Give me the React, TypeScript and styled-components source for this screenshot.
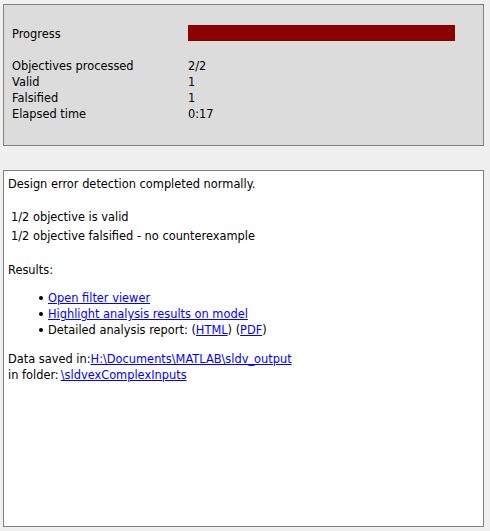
import React from "react";
import styled, { createGlobalStyle } from "styled-components";

const Global = createGlobalStyle`
  html, body { margin: 0; padding: 0; background: #f0f0f0; }
  body { font-family: "DejaVu Sans", Verdana, sans-serif; font-size: 11.4px; color: #000; }
`;

const Page = styled.div`
  display: flex;
  flex-direction: column;
  padding: 4px 0 0 3px;
  gap: 24px;
`;

const StatusPanel = styled.section`
  box-sizing: border-box;
  width: 481px;
  height: 142px;
  background: #dcdcdc;
  border: 1px solid #808080;
  padding: 20px 0 0 8px;
  display: grid;
  grid-template-columns: 176px 267px;
  grid-auto-rows: 16px;
  line-height: 16px;
`;

const Cell = styled.div`
  padding-top: 1px;
  white-space: nowrap;
`;

const Spacer = styled.div`
  grid-column: 1 / -1;
`;

const Bar = styled.div`
  background: #8b0000;
  height: 16px;
`;

const ReportPanel = styled.section`
  box-sizing: border-box;
  width: 481px;
  height: 357px;
  background: #fff;
  border: 1px solid #808080;
  padding: 5px 4px 0 4px;
  line-height: 16px;
  display: flex;
  flex-direction: column;
`;

const Line = styled.div<{ $top?: number; $indent?: number; $h?: number }>`
  margin-top: ${(p) => p.$top ?? 0}px;
  padding-left: ${(p) => p.$indent ?? 0}px;
  height: ${(p) => p.$h ?? 16}px;
  display: flex;
  align-items: center;
  white-space: nowrap;
`;

const List = styled.ul`
  margin: 12px 0 0 0;
  padding: 0 0 0 40px;
  list-style: none;
`;

const Item = styled.li`
  position: relative;
  height: 16px;
  display: flex;
  align-items: center;
  white-space: nowrap;
  &::before {
    content: "";
    position: absolute;
    left: -9px;
    top: 6px;
    width: 4px;
    height: 4px;
    border-radius: 50%;
    background: #000;
  }
`;

const Link = styled.a`
  color: #0000ff;
  text-decoration: underline;
  cursor: pointer;
`;

const PathLink = styled(Link)<{ $gap?: number }>`
  margin-left: ${(p) => p.$gap ?? 2}px;
`;

export default function App() {
  return (
    <>
      <Global />
      <Page>
        <StatusPanel>
          <Cell>Progress</Cell>
          <Bar />
          <Spacer />
          <Cell>Objectives processed</Cell>
          <Cell>2/2</Cell>
          <Cell>Valid</Cell>
          <Cell>1</Cell>
          <Cell>Falsified</Cell>
          <Cell>1</Cell>
          <Cell>Elapsed time</Cell>
          <Cell>0:17</Cell>
        </StatusPanel>
        <ReportPanel>
          <Line>Design error detection completed normally.</Line>
          <Line $top={16} $indent={3} $h={18}>1/2 objective is valid</Line>
          <Line $indent={3} $h={19}>1/2 objective falsified - no counterexample</Line>
          <Line $top={17}>Results:</Line>
          <List>
            <Item><Link>Open filter viewer</Link></Item>
            <Item><Link>Highlight analysis results on model</Link></Item>
            <Item>
              Detailed analysis report: (<Link>HTML</Link>) (<Link>PDF</Link>)
            </Item>
          </List>
          <Line $top={13}>
            Data saved in:<PathLink $gap={0}>H:\Documents\MATLAB\sldv_output</PathLink>
          </Line>
          <Line>
            in folder:<PathLink>\sldvexComplexInputs</PathLink>
          </Line>
        </ReportPanel>
      </Page>
    </>
  );
}
